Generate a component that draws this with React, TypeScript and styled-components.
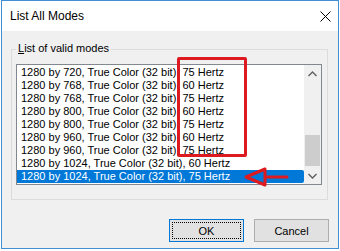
import styled, { createGlobalStyle } from "styled-components";

const GlobalStyle = createGlobalStyle`
  html, body {
    margin: 0;
    padding: 0;
    background: #ffffff;
  }
  body {
    font-family: "Liberation Sans", Arial, sans-serif;
    font-size: 11px;
    color: #000;
  }
`;

const modes = [
  { res: "1280 by 720", hz: 75 },
  { res: "1280 by 768", hz: 60 },
  { res: "1280 by 768", hz: 75 },
  { res: "1280 by 800", hz: 60 },
  { res: "1280 by 800", hz: 75 },
  { res: "1280 by 960", hz: 60 },
  { res: "1280 by 960", hz: 75 },
  { res: "1280 by 1024", hz: 60 },
  { res: "1280 by 1024", hz: 75 },
];

const Window = styled.div`
  position: relative;
  box-sizing: border-box;
  width: 338px;
  height: 249px;
  margin-left: 1px;
  border: 1px solid #3f8ed6;
  display: flex;
  flex-direction: column;
  background: #f0f0f0;
`;

const TitleBar = styled.div`
  height: 30px;
  flex: none;
  background: #ffffff;
  display: flex;
  align-items: center;
  justify-content: space-between;
  padding: 0 7px 0 8px;
  font-size: 12px;
`;

const Body = styled.div`
  flex: 1;
  display: flex;
  flex-direction: column;
  padding: 18px 9px 0 9px;
`;

const GroupBox = styled.div`
  position: relative;
  width: 317px;
  box-sizing: border-box;
  border: 1px solid #dcdcdc;
  padding: 14px 5px 14px 4px;
`;

const Legend = styled.span`
  position: absolute;
  top: -8px;
  left: 4px;
  padding: 0 2px;
  line-height: 13px;
  background: #f0f0f0;

  u {
    text-decoration: underline;
    text-underline-offset: 1px;
  }
`;

const ListBox = styled.div`
  box-sizing: border-box;
  width: 306px;
  height: 121px;
  border: 1px solid #828790;
  background: #ffffff;
  display: flex;
`;

const Rows = styled.div`
  flex: 1;
  padding-top: 1px;
  display: flex;
  flex-direction: column;
`;

const Row = styled.div<{ $selected?: boolean }>`
  height: 13px;
  line-height: 13px;
  padding-left: 4px;
  white-space: nowrap;
  color: ${(p) => (p.$selected ? "#ffffff" : "#000000")};
  background: ${(p) => (p.$selected ? "#0078d7" : "transparent")};
  border-radius: ${(p) => (p.$selected ? "0 2px 2px 0" : "0")};
`;

const ScrollBar = styled.div`
  width: 17px;
  flex: none;
  background: #f0f0f0;
  display: flex;
  flex-direction: column;
`;

const ScrollButton = styled.div`
  height: 17px;
  display: flex;
  align-items: center;
  justify-content: center;
`;

const Track = styled.div`
  flex: 1;
  display: flex;
  flex-direction: column;
  justify-content: flex-end;
  padding: 0 1px 1px 1px;
`;

const Thumb = styled.div`
  height: 31px;
  background: #cdcdcd;
`;

const ButtonRow = styled.div`
  display: flex;
  justify-content: flex-end;
  gap: 10px;
  margin-top: 19px;
`;

const Button = styled.button<{ $default?: boolean }>`
  box-sizing: border-box;
  width: 75px;
  height: 23px;
  padding: 0;
  font-family: inherit;
  font-size: 11px;
  color: #000;
  background: #e1e1e1;
  border: 1px solid ${(p) => (p.$default ? "#0078d7" : "#adadad")};
  outline: ${(p) => (p.$default ? "1px dotted #000" : "none")};
  outline-offset: -4px;
`;

const Callout = styled.div`
  position: absolute;
  left: 175px;
  top: 56px;
  width: 70px;
  height: 100px;
  box-sizing: border-box;
  border: 3px solid #dc1a1f;
  border-radius: 2px;
`;

const ArrowMark = styled.svg`
  position: absolute;
  left: 238px;
  top: 163px;
`;

function Chevron({ up }: { up?: boolean }) {
  return (
    <svg width="9" height="6" viewBox="0 0 9 6">
      <path
        d={up ? "M0.5 5 L4.5 1 L8.5 5" : "M0.5 1 L4.5 5 L8.5 1"}
        fill="none"
        stroke="#606060"
        strokeWidth="1.4"
      />
    </svg>
  );
}

export default function App() {
  return (
    <>
      <GlobalStyle />
      <Window>
        <TitleBar>
          <span>List All Modes</span>
          <svg width="11" height="11" viewBox="0 0 11 11">
            <path d="M0.5 0.5 L10.5 10.5 M10.5 0.5 L0.5 10.5" stroke="#000" strokeWidth="1" />
          </svg>
        </TitleBar>
        <Body>
          <GroupBox>
            <Legend>
              <u>L</u>ist of valid modes
            </Legend>
            <ListBox>
              <Rows>
                {modes.map((m, i) => (
                  <Row key={i} $selected={i === modes.length - 1}>
                    {m.res}, True Color (32 bit), {m.hz} Hertz
                  </Row>
                ))}
              </Rows>
              <ScrollBar>
                <ScrollButton>
                  <Chevron up />
                </ScrollButton>
                <Track>
                  <Thumb />
                </Track>
                <ScrollButton>
                  <Chevron />
                </ScrollButton>
              </ScrollBar>
            </ListBox>
          </GroupBox>
          <ButtonRow>
            <Button $default>OK</Button>
            <Button>Cancel</Button>
          </ButtonRow>
        </Body>
        <Callout />
        <ArrowMark width="50" height="26" viewBox="0 0 50 26">
          <path d="M26 13 L47 13" stroke="#dc1a1f" strokeWidth="3" strokeLinecap="round" />
          <path
            d="M6 13 L25 5 L25 21 Z"
            fill="none"
            stroke="#dc1a1f"
            strokeWidth="3"
            strokeLinejoin="round"
          />
        </ArrowMark>
      </Window>
    </>
  );
}
